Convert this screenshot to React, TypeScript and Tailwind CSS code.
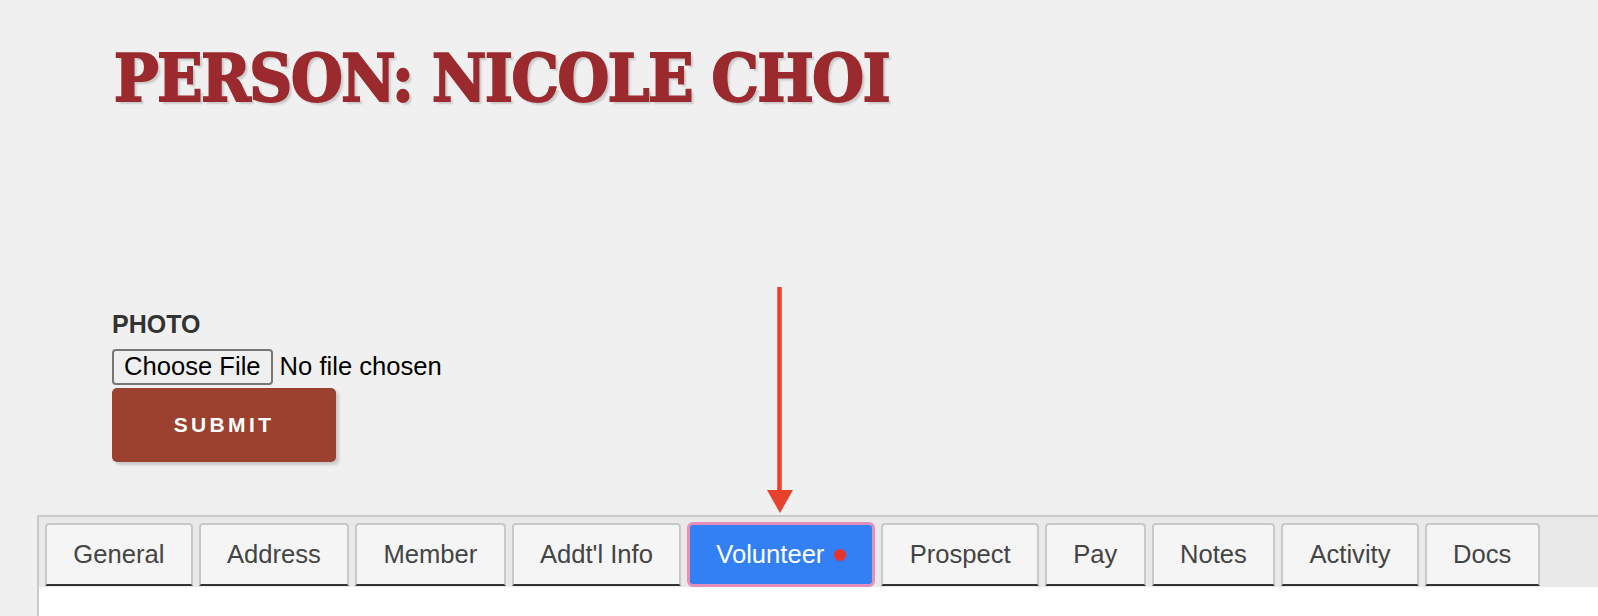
const tabs = [
  'General',
  'Address',
  'Member',
  "Addt'l Info",
  'Volunteer',
  'Prospect',
  'Pay',
  'Notes',
  'Activity',
  'Docs',
];

const active = 'Volunteer';

const App = () => {
  return (
    <div className="relative min-h-[616px] overflow-hidden bg-[#f0f0f0] font-['Liberation_Sans',Arial,sans-serif]">
      <div className="pl-[114px] pt-[45px]">
        <h1 className="font-['DejaVu_Serif',serif] text-[66px] font-bold leading-none tracking-[-1.3px] text-[#9b2a2f] [-webkit-text-stroke:2px_#9b2a2f] [font-stretch:condensed] [text-shadow:3px_3px_2px_rgba(0,0,0,0.16)]">
          PERSON: NICOLE CHOI
        </h1>
      </div>

      <form className="mt-[201px] flex flex-col items-start pl-[112px]">
        <label className="text-[25px] font-bold leading-none text-[#333]">PHOTO</label>
        <input
          type="file"
          className="mt-[12px] h-[36px] text-[25.6px] leading-none text-black file:mr-[7px] file:h-[36px] file:rounded-[4px] file:border-2 file:border-[#767676] file:bg-[#efefef] file:px-[10px] file:text-black"
        />
        <button
          type="button"
          className="mt-[3px] h-[74px] w-[224px] rounded-[5px] bg-[#9c4130] text-[21px] font-bold tracking-[0.16em] text-white shadow-[3px_3px_3px_rgba(0,0,0,0.16)]"
        >
          SUBMIT
        </button>
      </form>

      <div className="ml-[37px] mt-[53px] border-l-2 border-t-2 border-[#c9c9c9] bg-white">
        <div className="flex gap-[6px] bg-[#e9e9e9] pl-[6px] pt-[6px]">
          {tabs.map((tab) =>
            tab === active ? (
              <div
                key={tab}
                className="-mt-px flex h-[65px] shrink-0 items-center gap-[10px] rounded-[6px] border-[3px] border-[#e58fbd] bg-[#3280f4] px-[26px] text-[25.6px] text-white"
              >
                {tab}
                <span className="block h-[12px] w-[12px] shrink-0 rounded-full bg-[#e8322a]" />
              </div>
            ) : (
              <div
                key={tab}
                className="flex h-[63px] shrink-0 items-center rounded-t-[4px] border-2 border-b-[#333] border-l-[#c9c9c9] border-r-[#c9c9c9] border-t-[#c9c9c9] bg-[#f5f5f5] px-[26.3px] text-[25.6px] text-[#444]"
              >
                {tab}
              </div>
            )
          )}
        </div>
        <div className="h-[40px]" />
      </div>

      {/* pointer arrow above the active tab */}
      <svg
        className="absolute left-[765px] top-[286px]"
        width="32"
        height="230"
        viewBox="0 0 32 230"
      >
        <line x1="14.5" y1="1" x2="14.5" y2="206" stroke="#e8412c" strokeWidth="4.5" />
        <polygon points="2,204 28,204 15,227" fill="#e8412c" />
      </svg>
    </div>
  );
};

export default App;
